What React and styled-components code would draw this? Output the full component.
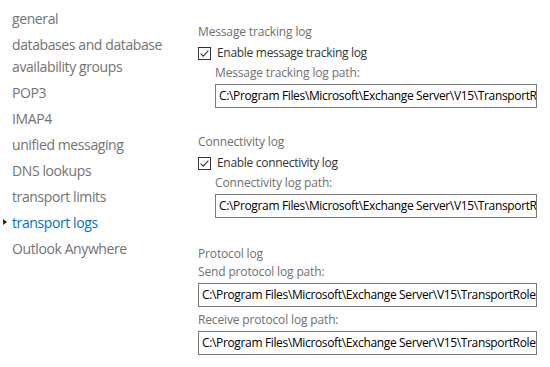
import React from "react";
import styled, { createGlobalStyle } from "styled-components";

const GlobalStyle = createGlobalStyle`
  html, body {
    margin: 0;
    padding: 0;
    background: #ffffff;
  }
  body {
    font-family: "Open Sans", "Noto Sans", Arial, sans-serif;
  }
`;

const navItems = [
  "general",
  "databases and database availability groups",
  "POP3",
  "IMAP4",
  "unified messaging",
  "DNS lookups",
  "transport limits",
  "transport logs",
  "Outlook Anywhere"
];

const PATH_LONG =
  "C:\\Program Files\\Microsoft\\Exchange Server\\V15\\TransportRoles\\Logs\\MessageTracking";
const PATH_CONN =
  "C:\\Program Files\\Microsoft\\Exchange Server\\V15\\TransportRoles\\Logs\\Hub\\Connectivity";
const PATH_SEND =
  "C:\\Program Files\\Microsoft\\Exchange Server\\V15\\TransportRoles\\Logs\\Hub\\ProtocolLog\\SmtpSend";
const PATH_RECV =
  "C:\\Program Files\\Microsoft\\Exchange Server\\V15\\TransportRoles\\Logs\\Hub\\ProtocolLog\\SmtpReceive";

function CheckIcon() {
  return (
    <svg width="13" height="13" viewBox="0 0 13 13">
      <rect x="0.5" y="0.5" width="12" height="12" fill="#fff" stroke="#333" />
      <path d="M2.6 6.6 L5.2 9.2 L10.4 3.6" fill="none" stroke="#333" strokeWidth="1.1" />
    </svg>
  );
}

export default function App() {
  return (
    <Page>
      <GlobalStyle />
      <Nav>
        {navItems.map(item => (
          <NavItem key={item} active={item === "transport logs"}>
            {item === "transport logs" && <Arrow />}
            {item}
          </NavItem>
        ))}
      </Nav>
      <Content>
        <Section>
          <Heading>Message tracking log</Heading>
          <CheckRow>
            <CheckIcon />
            <span>Enable message tracking log</span>
          </CheckRow>
          <Indent>
            <FieldLabel>Message tracking log path:</FieldLabel>
            <PathBox>{PATH_LONG}</PathBox>
          </Indent>
        </Section>
        <Section>
          <Heading>Connectivity log</Heading>
          <CheckRow>
            <CheckIcon />
            <span>Enable connectivity log</span>
          </CheckRow>
          <Indent>
            <FieldLabel>Connectivity log path:</FieldLabel>
            <PathBox>{PATH_CONN}</PathBox>
          </Indent>
        </Section>
        <Section spaced>
          <Heading>Protocol log</Heading>
          <FieldLabel tight>Send protocol log path:</FieldLabel>
          <PathBox>{PATH_SEND}</PathBox>
          <FieldLabel spaced>Receive protocol log path:</FieldLabel>
          <PathBox>{PATH_RECV}</PathBox>
        </Section>
      </Content>
    </Page>
  );
}

const Page = styled.div`
  display: flex;
  width: 550px;
  height: 367px;
  overflow: hidden;
`;

const Nav = styled.ul`
  list-style: none;
  margin: 0;
  padding: 8px 0 0 12px;
  width: 178px;
  flex-shrink: 0;
  display: flex;
  flex-direction: column;
  gap: 4px;
`;

const NavItem = styled.li`
  position: relative;
  font-size: 14px;
  line-height: 22px;
  color: ${p => (p.active ? "#0072c6" : "#737373")};
  letter-spacing: -0.4px;
`;

const Arrow = styled.span`
  position: absolute;
  left: -9px;
  top: 7px;
  width: 0;
  height: 0;
  border-top: 3.5px solid transparent;
  border-bottom: 3.5px solid transparent;
  border-left: 4px solid #222;
`;

const Content = styled.div`
  flex: 1;
  min-width: 0;
  padding: 23px 13px 0 8px;
  display: flex;
  flex-direction: column;
`;

const Section = styled.div`
  display: flex;
  flex-direction: column;
  margin-bottom: ${p => (p.spaced ? "0" : "25px")};
  padding-top: ${p => (p.spaced ? "2px" : "0")};
`;

const Heading = styled.div`
  font-size: 12px;
  line-height: 18px;
  color: #707070;
  letter-spacing: -0.15px;
`;

const CheckRow = styled.div`
  display: flex;
  align-items: center;
  gap: 6px;
  margin-top: 3px;
  font-size: 12px;
  line-height: 18px;
  color: #333;
  letter-spacing: -0.3px;
`;

const Indent = styled.div`
  padding-left: 17px;
  display: flex;
  flex-direction: column;
`;

const FieldLabel = styled.div`
  font-size: 12px;
  line-height: 18px;
  color: #707070;
  letter-spacing: -0.15px;
  margin-top: ${p => (p.tight ? "0" : p.spaced ? "4px" : "2px")};
  margin-bottom: 2px;
`;

const PathBox = styled.div`
  box-sizing: border-box;
  height: 24px;
  border: 1px solid #7a7a7a;
  padding: 0 0 0 3px;
  font-size: 12px;
  line-height: 22px;
  color: #000;
  letter-spacing: -0.35px;
  white-space: nowrap;
  overflow: hidden;
`;
